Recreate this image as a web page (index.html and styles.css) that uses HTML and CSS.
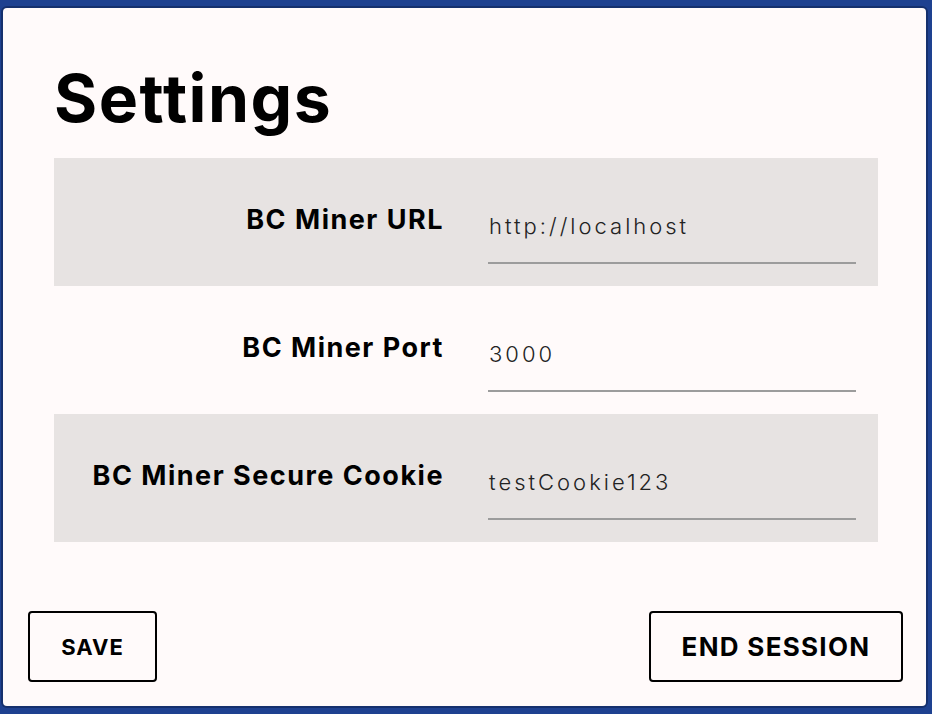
FILE: index.html
```html
<!DOCTYPE html>
<html>
<head>
<meta charset="utf-8">
<link rel="stylesheet" href="styles.css">
</head>
<body>
<div class="modal">
  <h1 class="title">Settings</h1>
  <div class="fields">
    <div class="row shaded">
      <label class="label">BC Miner URL</label>
      <div class="control"><div class="input">http://localhost</div></div>
    </div>
    <div class="row">
      <label class="label">BC Miner Port</label>
      <div class="control"><div class="input">3000</div></div>
    </div>
    <div class="row shaded">
      <label class="label">BC Miner Secure Cookie</label>
      <div class="control"><div class="input">testCookie123</div></div>
    </div>
  </div>
  <div class="actions">
    <button class="btn btn-save">SAVE</button>
    <button class="btn btn-end">END SESSION</button>
  </div>
</div>
</body>
</html>
```

FILE: styles.css
```css
html, body {
  margin: 0;
  padding: 0;
  height: 100%;
}
body {
  background: #1e4190;
  font-family: "Inter", "Noto Sans", sans-serif;
  padding: 8px 6px 8px 3px;
  box-sizing: border-box;
  height: 714px;
  overflow: hidden;
}
.modal {
  background: #fffafa;
  border-radius: 4px;
  box-shadow: 0 0 0 2px #15306d;
  height: 698px;
  box-sizing: border-box;
  padding: 52px 23px 24px 25px;
  display: flex;
  flex-direction: column;
}
.title {
  margin: 0 0 0 26px;
  font-size: 66px;
  font-weight: 700;
  line-height: 76px;
  letter-spacing: 1.5px;
  color: #000;
  height: 98px;
}
.fields {
  margin: 0 25px 0 26px;
}
.row {
  display: grid;
  grid-template-columns: 1fr 1fr;
  height: 128px;
}
.row.shaded {
  background: #e7e3e2;
}
.label {
  padding: 45px 22px 0 22px;
  text-align: right;
  font-size: 27px;
  font-weight: 700;
  letter-spacing: 1.5px;
  color: #000;
  white-space: nowrap;
}
.control {
  padding: 55px 22px 0 22px;
}
.input {
  font-size: 22px;
  font-weight: 300;
  color: #222;
  letter-spacing: 3px;
  padding: 0 0 23px 1px;
  border-bottom: 2px solid #9c9c9c;
}
.actions {
  margin-top: auto;
  display: flex;
  justify-content: space-between;
}
.btn {
  background: transparent;
  border: 2px solid #000;
  border-radius: 4px;
  height: 71px;
  font-family: "Inter", "Noto Sans", sans-serif;
  font-weight: 700;
  color: #000;
  cursor: pointer;
  padding: 0;
}
.btn-save {
  width: 129px;
  font-size: 22px;
  letter-spacing: 1px;
}
.btn-end {
  width: 254px;
  font-size: 26px;
  letter-spacing: 1.3px;
}
```
